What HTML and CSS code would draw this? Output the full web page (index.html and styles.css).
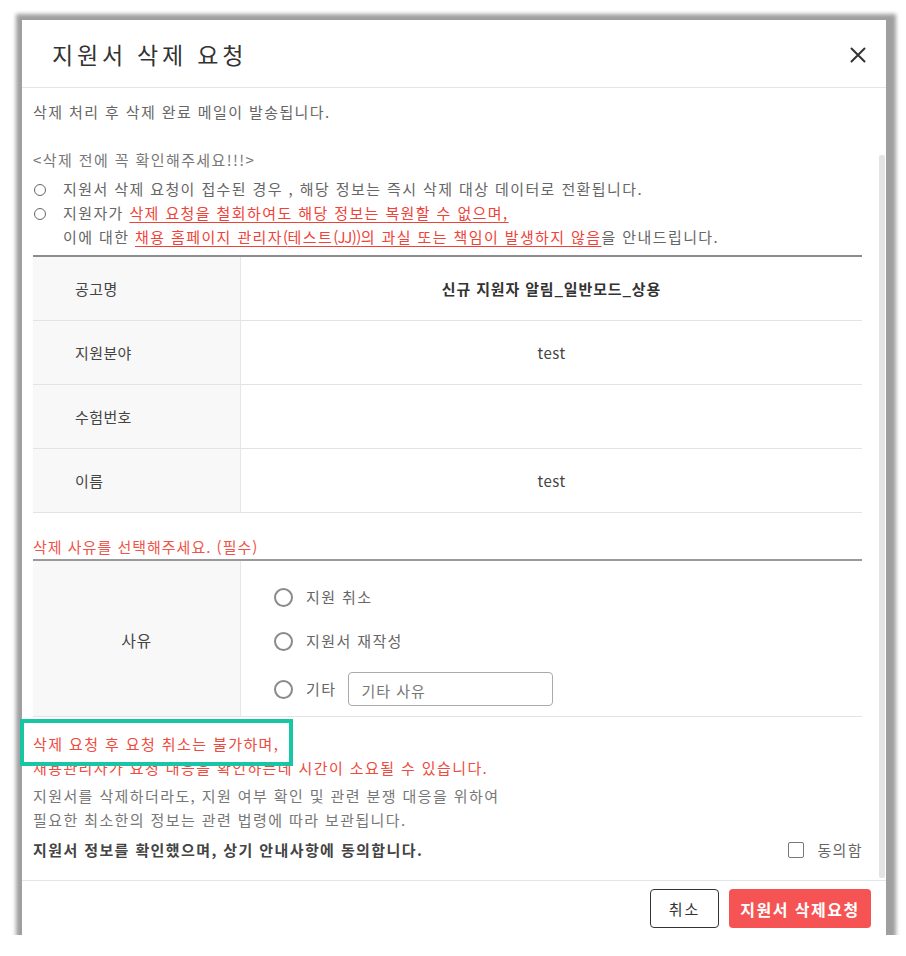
FILE: index.html
```html
<!DOCTYPE html>
<html lang="ko">
<head>
<meta charset="utf-8">
<title>지원서 삭제 요청</title>
<link rel="stylesheet" href="styles.css">
</head>
<body>
<div class="modal">
  <div class="modal-header">
    <h1 class="modal-title">지원서 삭제 요청</h1>
    <button class="close-btn" aria-label="닫기">
      <svg width="16" height="16" viewBox="0 0 16 16"><path d="M1.5 1.5 L14.5 14.5 M14.5 1.5 L1.5 14.5" stroke="#333" stroke-width="2" fill="none" stroke-linecap="round"/></svg>
    </button>
  </div>
  <div class="modal-body">
    <div class="scroll-thumb"></div>
    <p class="intro">삭제 처리 후 삭제 완료 메일이 발송됩니다.</p>
    <p class="check-title">&lt;삭제 전에 꼭 확인해주세요!!!&gt;</p>
    <ul class="check-list">
      <li><span class="bullet"></span><span>지원서 삭제 요청이 접수된 경우 , 해당 정보는 즉시 삭제 대상 데이터로 전환됩니다.</span></li>
      <li><span class="bullet"></span><span>지원자가 <u class="warn">삭제 요청을 철회하여도 해당 정보는 복원할 수 없으며,</u><br>이에 대한 <u class="warn">채용 홈페이지 관리자<span class="tight">(</span>테스트<span class="tight">(JJ))</span>의 과실 또는 책임이 발생하지 않음</u>을 안내드립니다.</span></li>
    </ul>

    <div class="info-table">
      <div class="row"><div class="label">공고명</div><div class="value strong">신규 지원자 알림_일반모드_상용</div></div>
      <div class="row"><div class="label">지원분야</div><div class="value">test</div></div>
      <div class="row"><div class="label">수험번호</div><div class="value"></div></div>
      <div class="row"><div class="label">이름</div><div class="value">test</div></div>
    </div>

    <p class="section-title">삭제 사유를 선택해주세요. (필수)</p>
    <div class="reason-table">
      <div class="reason-label">사유</div>
      <div class="reason-options">
        <label class="option"><span class="radio"></span><span>지원 취소</span></label>
        <label class="option"><span class="radio"></span><span>지원서 재작성</span></label>
        <label class="option option-etc"><span class="radio"></span><span>기타</span><span class="etc-input">기타 사유</span></label>
      </div>
    </div>

    <div class="notice">
      <p class="notice-red">삭제 요청 후 요청 취소는 불가하며,<br>채용관리자가 요청 대응을 확인하는데 시간이 소요될 수 있습니다.</p>
      <p class="notice-gray">지원서를 삭제하더라도, 지원 여부 확인 및 관련 분쟁 대응을 위하여<br>필요한 최소한의 정보는 관련 법령에 따라 보관됩니다.</p>
      <div class="agree-row">
        <span class="agree-text">지원서 정보를 확인했으며, 상기 안내사항에 동의합니다.</span>
        <label class="agree-check"><span class="checkbox"></span><span>동의함</span></label>
      </div>
      <div class="highlight"></div>
    </div>
  </div>
  <div class="modal-footer">
    <button class="btn btn-cancel">취소</button>
    <button class="btn btn-delete">지원서 삭제요청</button>
  </div>
</div>
</body>
</html>
```

FILE: styles.css
```css
* { box-sizing: border-box; }

html, body {
  margin: 0;
  background: #ffffff;
}

body {
  padding: 20px 0 0 22px;
  font-family: "Noto Sans CJK KR", "Noto Sans", sans-serif;
  font-size: 15px;
  letter-spacing: 1.4px;
  color: #666;
}

p { margin: 0; }

.modal {
  width: 864px;
  height: 915px;
  background: #fff;
  display: flex;
  flex-direction: column;
  box-shadow: 2px 2px 4px 8px #9f9f9f;
}

.modal-header {
  height: 68px;
  flex: none;
  display: flex;
  align-items: center;
  justify-content: space-between;
  padding: 0 19px 0 30px;
  border-bottom: 1px solid #e6e6e6;
}

.modal-title {
  margin: 0;
  font-size: 23px;
  font-weight: 400;
  letter-spacing: 3.8px;
  color: #333;
  line-height: 1;
  padding-top: 2px;
}

.close-btn {
  border: 0;
  background: none;
  padding: 0;
  width: 18px;
  height: 18px;
  display: flex;
  align-items: center;
  justify-content: center;
  margin-top: 2px;
}

.modal-body {
  flex: 1;
  position: relative;
  padding: 12px 24px 0 11px;
  line-height: 24px;
}

.scroll-thumb {
  position: absolute;
  right: 1px;
  top: 67px;
  bottom: 2px;
  width: 6px;
  background: #e4e4e4;
  border-radius: 2px;
}

.intro { color: #666; }

.check-title {
  margin-top: 24px;
  color: #777;
}

.check-list {
  list-style: none;
  margin: 5px 0 0;
  padding: 0;
  color: #666;
}

.check-list li {
  display: flex;
  align-items: flex-start;
}

.bullet {
  flex: none;
  width: 12px;
  height: 12px;
  border: 1px solid #666;
  border-radius: 50%;
  margin: 7px 17px 0 1px;
}

.warn {
  color: #ef4339;
  text-decoration: underline;
  text-underline-offset: 3px;
}

.tight { letter-spacing: -0.6px; }

.info-table {
  margin-top: 6px;
  border-top: 2px solid #8c8c8c;
}

.row {
  display: grid;
  grid-template-columns: 208px 1fr;
  height: 64px;
  border-bottom: 1px solid #e3e3e3;
}

.label {
  background: #f8f8f8;
  border-right: 1px solid #e6e6e6;
  display: flex;
  align-items: center;
  padding-left: 42px;
  color: #444;
  letter-spacing: 0.4px;
}

.value {
  display: flex;
  align-items: center;
  justify-content: center;
  color: #444;
  letter-spacing: 0.5px;
}

.value.strong {
  font-weight: 700;
  color: #333;
  letter-spacing: 0.85px;
}

.section-title {
  margin-top: 22px;
  color: #f05448;
  letter-spacing: 1px;
}

.reason-table {
  display: grid;
  grid-template-columns: 208px 1fr;
  border-top: 2px solid #9a9a9a;
  border-bottom: 1px solid #e3e3e3;
}

.reason-label {
  background: #f8f8f8;
  border-right: 1px solid #e6e6e6;
  display: flex;
  align-items: center;
  justify-content: center;
  color: #444;
  font-size: 16px;
  letter-spacing: 0.5px;
  padding-top: 2px;
}

.reason-options {
  display: flex;
  flex-direction: column;
  gap: 20px;
  padding: 24px 0 10px 33px;
  color: #666;
}

.option {
  display: flex;
  align-items: center;
  height: 24px;
}

.option-etc { height: 34px; margin-top: -1px; }

.radio {
  width: 19px;
  height: 19px;
  border: 2px solid #8a8a8a;
  border-radius: 50%;
  margin-right: 13px;
  flex: none;
}

.etc-input {
  margin-left: 12px;
  width: 205px;
  height: 34px;
  border: 1px solid #aaa;
  border-radius: 4px;
  padding: 4px 12px 0;
  display: flex;
  align-items: center;
  color: #777;
  letter-spacing: 1px;
}

.notice {
  position: relative;
  margin-top: 15px;
}

.notice-red { color: #ef4a40; }

.notice-gray {
  margin-top: 4px;
  color: #777;
}

.agree-row {
  margin-top: 6px;
  display: flex;
  justify-content: space-between;
  align-items: center;
}

.agree-text {
  font-weight: 700;
  color: #444;
  letter-spacing: 1.4px;
}

.agree-check {
  display: flex;
  align-items: center;
  color: #666;
  margin-right: -1px;
}

.checkbox {
  width: 16px;
  height: 16px;
  border: 1.5px solid #777;
  border-radius: 2px;
  margin-right: 13px;
}

.highlight {
  position: absolute;
  left: -13px;
  top: -13px;
  width: 273px;
  height: 47px;
  border: 4px solid #17c6a3;
  background: linear-gradient(to bottom, transparent 34px, #fff 34px);
}

.modal-footer {
  flex: none;
  border-top: 1px solid #e6e6e6;
  padding: 8px 15px 7px;
  display: flex;
  justify-content: flex-end;
  gap: 10px;
}

.btn {
  height: 39px;
  border-radius: 4px;
  font-family: "Noto Sans CJK KR", "Noto Sans", sans-serif;
  font-size: 15px;
  letter-spacing: 2px;
  padding: 0;
}

.btn-cancel {
  width: 69px;
  border: 1px solid #333;
  background: #fff;
  color: #333;
}

.btn-delete {
  width: 142px;
  border: 0;
  background: #f65454;
  color: #fff;
  font-weight: 700;
  font-size: 16px;
  letter-spacing: 1.5px;
}
```
